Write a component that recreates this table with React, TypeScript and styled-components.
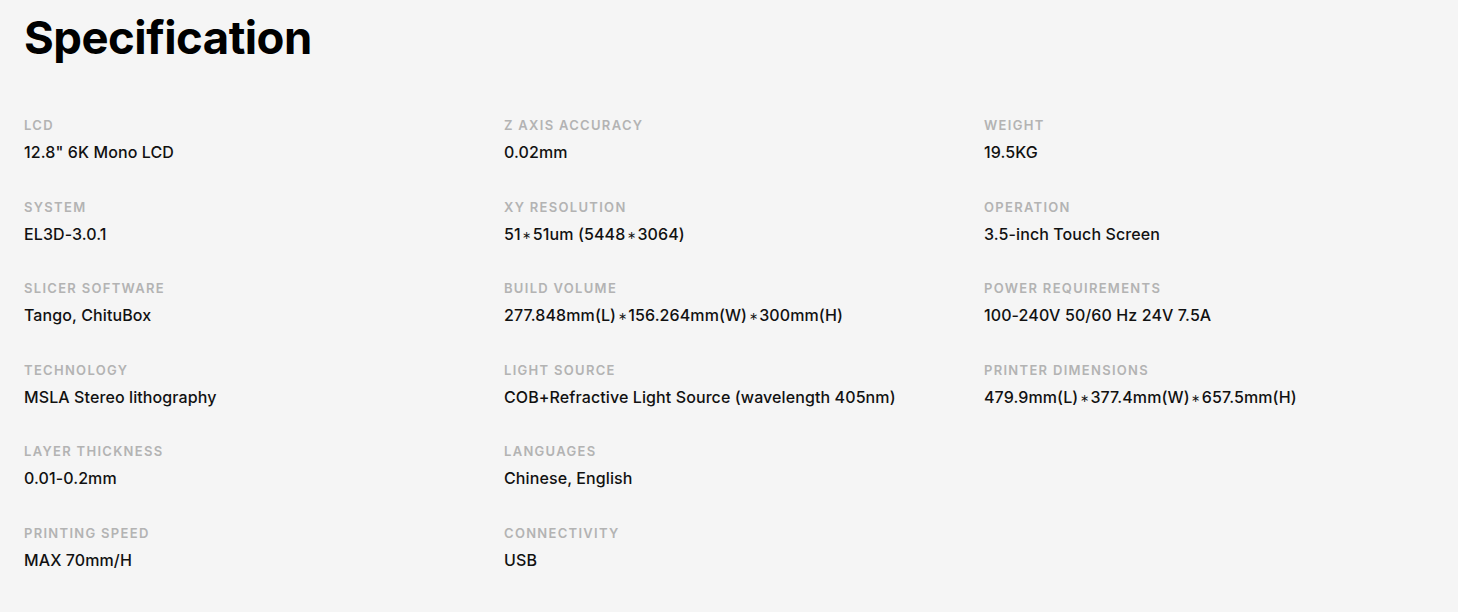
import React from "react";
import styled, { createGlobalStyle } from "styled-components";

const Global = createGlobalStyle`
  html, body { margin: 0; padding: 0; background: #f5f5f5; }
  body { font-family: Inter, "Noto Sans", sans-serif; color: #111; }
`;

const Page = styled.div`
  padding: 8px 24px 0 24px;
`;

const Title = styled.h1`
  margin: 0;
  font-size: 45.5px;
  font-weight: 700;
  letter-spacing: -0.5px;
  line-height: 60px;
  color: #000;
`;

const Grid = styled.div`
  display: grid;
  grid-template-columns: 480px 480px 480px;
  margin-top: 49px;
`;

const Column = styled.div`
  display: flex;
  flex-direction: column;
  gap: 36.5px;
`;

const Item = styled.div`
  display: flex;
  flex-direction: column;
  gap: 9px;
`;

const Label = styled.div`
  font-size: 13px;
  font-weight: 600;
  letter-spacing: 1.3px;
  text-transform: uppercase;
  color: #b3b3b3;
  line-height: 16px;
`;

const Value = styled.div`
  font-size: 16px;
  font-weight: 500;
  letter-spacing: 0.1px;
  color: #111;
  line-height: 20px;
  height: 20px;
`;

const Star = styled.span`
  font-size: 11px;
  line-height: 0;
  margin: 0 1.5px;
  vertical-align: 1px;
`;

const renderValue = (v: string) =>
  v.split("*").flatMap((part, i) =>
    i === 0 ? [part] : [<Star key={i}>∗</Star>, part]
  );

const columns: [string, string][][] = [
  [
    ["LCD", "12.8\" 6K Mono LCD"],
    ["System", "EL3D-3.0.1"],
    ["Slicer Software", "Tango, ChituBox"],
    ["Technology", "MSLA Stereo lithography"],
    ["Layer Thickness", "0.01-0.2mm"],
    ["Printing Speed", "MAX 70mm/H"],
  ],
  [
    ["Z Axis Accuracy", "0.02mm"],
    ["XY Resolution", "51*51um (5448*3064)"],
    ["Build Volume", "277.848mm(L)*156.264mm(W)*300mm(H)"],
    ["Light Source", "COB+Refractive Light Source (wavelength 405nm)"],
    ["Languages", "Chinese, English"],
    ["Connectivity", "USB"],
  ],
  [
    ["Weight", "19.5KG"],
    ["Operation", "3.5-inch Touch Screen"],
    ["Power Requirements", "100-240V 50/60 Hz 24V 7.5A"],
    ["Printer Dimensions", "479.9mm(L)*377.4mm(W)*657.5mm(H)"],
  ],
];

export default function App() {
  return (
    <>
      <Global />
      <Page>
        <Title>Specification</Title>
        <Grid>
          {columns.map((col, i) => (
            <Column key={i}>
              {col.map(([label, value]) => (
                <Item key={label}>
                  <Label>{label}</Label>
                  <Value>{renderValue(value)}</Value>
                </Item>
              ))}
            </Column>
          ))}
        </Grid>
      </Page>
    </>
  );
}
